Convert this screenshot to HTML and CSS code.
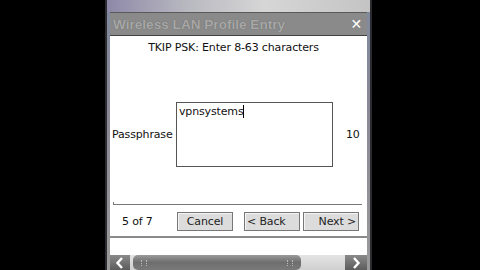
FILE: index.html
```html
<!DOCTYPE html>
<html>
<head>
<meta charset="utf-8">
<link rel="stylesheet" href="styles.css">
</head>
<body>
<div class="device">
  <div class="frame">
    <div class="desk"></div>
    <div class="titlebar">
      <span class="title">Wireless LAN Profile Entry</span>
      <span class="close">✕</span>
    </div>
    <div class="content">
      <div class="heading">TKIP PSK: Enter 8-63 characters</div>
      <div class="form-row">
        <span class="label">Passphrase</span>
        <div class="textbox"><span class="value">vpnsystems</span><span class="caret"></span></div>
        <span class="count">10</span>
      </div>
      <div class="rule"><span class="tick"></span></div>
      <div class="nav-row">
        <span class="step">5 of 7</span>
        <button class="btn btn-cancel">Cancel</button>
        <button class="btn btn-back">&lt; Back</button>
        <button class="btn btn-next">Next &gt;</button>
      </div>
      <div class="bottom"></div>
    </div>
    <div class="scrollbar">
      <div class="arrow arrow-left">
        <svg width="10" height="12" viewBox="0 0 10 12"><path d="M7 1 L2.5 6 L7 11" fill="none" stroke="#fff" stroke-width="2.4"/></svg>
      </div>
      <div class="track">
        <div class="thumb"><span class="grip"></span><span class="grip"></span></div>
      </div>
      <div class="arrow arrow-right">
        <svg width="10" height="12" viewBox="0 0 10 12"><path d="M3 1 L7.5 6 L3 11" fill="none" stroke="#fff" stroke-width="2.4"/></svg>
      </div>
    </div>
  </div>
</div>
</body>
</html>
```
FILE: styles.css
```css
html, body {
  margin: 0;
  padding: 0;
  background: #000;
  width: 480px;
  height: 270px;
  overflow: hidden;
}
body {
  font-family: "DejaVu Sans", "Liberation Sans", sans-serif;
  font-size: 11px;
  letter-spacing: -0.15px;
  color: #111;
}
.device {
  display: flex;
  padding-left: 105px;
  height: 270px;
}
.frame {
  width: 257px;
  height: 270px;
  border-left: 2px solid #2c2c30;
  border-right: 2px solid #2c2c30;
  padding: 0 3px;
  background: linear-gradient(#7f8aa0 0%, #8a8896 40%, #9a9a9a 100%);
  display: flex;
  flex-direction: column;
}
.desk {
  height: 12px;
  margin: 0 -3px;
  background: linear-gradient(90deg, #8e88a8 0%, #b8b8c0 30%, #d6d6d6 60%, #c4c4c4 100%);
}
.titlebar {
  height: 22px;
  background: #8a8a8a;
  border-top: 1px solid #5a5a5a;
  border-bottom: 1px solid #404040;
  display: flex;
  align-items: center;
  justify-content: space-between;
  padding: 0 5px 0 3px;
}
.title {
  font-family: "Liberation Sans", sans-serif;
  font-weight: bold;
  font-size: 13.6px;
  color: #a8a8a8;
  letter-spacing: 0;
  text-shadow: 0 0 1px #5f5f5f;
}
.close {
  color: #fff;
  font-weight: bold;
  font-size: 14px;
}
.content {
  flex: 1;
  background: #fff;
  display: flex;
  flex-direction: column;
}
.heading {
  text-align: center;
  margin-top: 5px;
  height: 14px;
  line-height: 14px;
  padding-right: 10px;
}
.form-row {
  display: flex;
  align-items: center;
  margin-top: 46px;
  height: 66px;
}
.label {
  width: 64px;
  padding-left: 2px;
}
.textbox {
  width: 157px;
  height: 65px;
  border: 1px solid #555;
  display: flex;
  align-items: flex-start;
  padding: 2px 0 0 2px;
  box-sizing: border-box;
}
.value {
  line-height: 13px;
}
.caret {
  width: 1px;
  height: 13px;
  background: #000;
}
.count {
  margin-left: 13px;
}
.rule {
  margin: 37px 5px 0 3px;
  height: 1px;
  background: #777;
  position: relative;
}
.tick {
  position: absolute;
  left: 0;
  top: -2px;
  width: 1px;
  height: 3px;
  background: #777;
}
.nav-row {
  display: flex;
  align-items: center;
  margin-top: 7px;
  height: 19px;
}
.step {
  width: 55px;
  padding-left: 12px;
  box-sizing: border-box;
}
.btn {
  font-family: "DejaVu Sans", "Liberation Sans", sans-serif;
  font-size: 11px;
  letter-spacing: -0.15px;
  color: #222;
  height: 19px;
  width: 56px;
  padding: 0;
  background: #dcdcdc;
  border: 1px solid #777;
  box-shadow: inset 1px 1px 0 #f4f4f4;
}
.btn-cancel { margin-left: 12px; }
.btn-back { margin-left: 11px; text-align: left; padding-left: 2px; }
.btn-next { margin-left: 3px; text-align: right; padding-right: 2px; }
.bottom {
  margin-top: 5px;
  border-top: 2px solid #8a8a8a;
  flex: 1;
}
.scrollbar {
  height: 15px;
  display: flex;
  background: #d9d9d9;
}
.arrow {
  width: 20px;
  display: flex;
  align-items: center;
  justify-content: center;
  background: linear-gradient(#8a8a8a, #5c5c5c);
}
.arrow-right { width: 22px; }
.track {
  flex: 1;
  display: flex;
  padding-left: 3px;
  background: linear-gradient(#e4e4e4, #cfcfcf);
}
.thumb {
  width: 152px;
  border-radius: 5px;
  background: linear-gradient(#9a9a9a, #6e6e6e 50%, #7a7a7a);
  display: flex;
  justify-content: space-between;
  align-items: center;
  padding: 0 8px;
}
.grip {
  width: 4px;
  height: 6px;
  border-left: 1px dotted #bbb;
  border-right: 1px dotted #bbb;
}
```
